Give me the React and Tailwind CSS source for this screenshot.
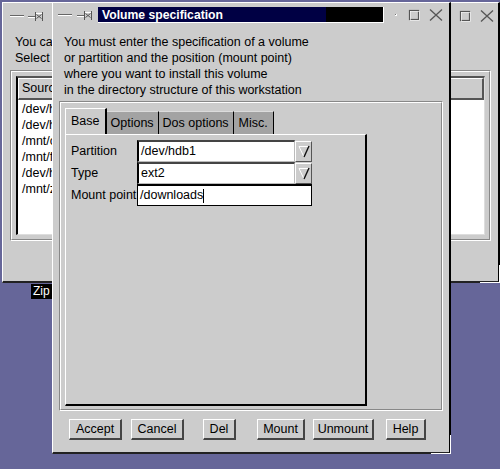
import React from 'react';

const font = { fontFamily: '"Liberation Sans", Arial, sans-serif' };

const Dash = () => (
  <svg width="15" height="6" viewBox="0 0 15 6" className="block">
    <line x1="0" y1="2.5" x2="14" y2="2.5" stroke="#666" strokeWidth="1" />
    <line x1="0" y1="3.5" x2="14" y2="3.5" stroke="#fff" strokeWidth="1" />
  </svg>
);

const Pin = () => (
  <svg width="16" height="11" viewBox="0 0 16 11" className="block">
    <line x1="0" y1="5.5" x2="7" y2="5.5" stroke="#666" />
    <line x1="0" y1="6.5" x2="7" y2="6.5" stroke="#fff" />
    <line x1="7.5" y1="1" x2="7.5" y2="10" stroke="#555" />
    <path d="M8.5 3.5 L13.5 7.5 M8.5 7.5 L13.5 3.5" stroke="#555" fill="none" />
    <line x1="14.5" y1="1" x2="14.5" y2="10" stroke="#555" />
    <line x1="8" y1="2.5" x2="14" y2="2.5" stroke="#fff" />
  </svg>
);

const MaxBox = () => (
  <svg width="12" height="12" viewBox="0 0 12 12" className="block">
    <rect x="1.5" y="1.5" width="9" height="9" fill="none" stroke="#555" strokeWidth="1.2" />
    <rect x="2.5" y="2.5" width="9" height="9" fill="none" stroke="#fff" strokeWidth="0.6" />
  </svg>
);

const CloseX = () => (
  <svg width="14" height="12" viewBox="0 0 14 12" className="block">
    <path d="M1 0.5 L13 11.5 M13 0.5 L1 11.5" stroke="#555" strokeWidth="1.3" fill="none" />
  </svg>
);

const ComboArrow = () => (
  <div className="w-[17px] h-[21px] bg-[#cccccc] border-t border-l border-white border-r border-b border-r-[#555] border-b-[#555] flex items-center justify-center">
    <svg width="12" height="13" viewBox="0 0 12 13" className="block">
      <path d="M1 1.5 H11" stroke="#fff" strokeWidth="1" />
      <path d="M1 1.5 L6 12" stroke="#fff" strokeWidth="1" />
      <path d="M11 1 L6 12" stroke="#111" strokeWidth="1.4" />
    </svg>
  </div>
);

const Button = ({ label, w, ml }) => (
  <button
    className={`h-[21px] ${w} ${ml} bg-[#cccccc] border-t border-l border-white border-r-2 border-b-2 border-r-[#444] border-b-[#444] text-[12.5px] text-black leading-none flex items-center justify-center`}
  >
    {label}
  </button>
);

const BackWindow = () => (
  <div className="absolute left-[2px] top-[2px] w-[498px] h-[281px] bg-[#cccccc] border-l border-t border-white border-r-2 border-b-2 border-r-black border-b-[#222]">
    <div className="h-[26px] flex items-center pl-[7px]">
      <Dash />
      <div className="ml-[3px]"><Pin /></div>
      <div className="flex-1" />
      <div className="mr-[9px]"><MaxBox /></div>
      <div className="mr-[4px]"><CloseX /></div>
    </div>
    <div className="pl-[12px] mt-[5px] text-[12.5px] leading-[16px] text-black">
      <div>You can mount</div>
      <div>Select a volume</div>
    </div>
    <div className="mx-[7px] mt-[4px] h-[171px] border border-t-[#888] border-l-[#888] border-b-white border-r-white">
      <div className="h-full border border-t-white border-l-white border-b-[#888] border-r-[#888] px-[4px] pt-[4px] pb-[4px]">
        <div className="h-full bg-white border-t-2 border-l-2 border-t-[#555] border-l-black border-b border-r border-b-[#ddd] border-r-[#ddd] flex flex-col">
          <div className="h-[22px] shrink-0 bg-[#cccccc] border-t border-l border-white border-r-2 border-b-2 border-r-[#555] border-b-[#555] pl-[3px] flex items-center text-[12.5px]">
            Source
          </div>
          <div className="pl-[4px] pt-[1px] text-[12.5px] leading-[16px]">
            <div>/dev/hda1</div>
            <div>/dev/hda5</div>
            <div>/mnt/cdrom</div>
            <div>/mnt/floppy</div>
            <div>/dev/hdb1</div>
            <div>/mnt/zip</div>
          </div>
        </div>
      </div>
    </div>
    <div className="absolute right-[-2px] bottom-[-2px] w-[20px] h-[18px] border-r border-b border-white" />
  </div>
);

const FrontWindow = () => (
  <div className="absolute left-[52px] top-[2px] w-[399px] h-[452px] bg-[#cccccc] border-l border-t border-white border-r-2 border-b-2 border-r-black border-b-[#222] flex flex-col">
    <div className="h-[24px] flex items-center pl-[5px] shrink-0">
      <Dash />
      <div className="ml-[4px]"><Pin /></div>
      <div className="ml-[5px] w-[286px] h-[16px] flex border-r border-b border-white">
        <div className="w-[228px] bg-[#000044] text-white font-bold text-[12.2px] leading-[16px] pl-[4px] whitespace-nowrap">
          Volume specification
        </div>
        <div className="flex-1 bg-black" />
      </div>
      <div className="ml-[11px] w-[2px] h-[2px] bg-[#777] border-r border-b border-white" />
      <div className="ml-[11px]"><MaxBox /></div>
      <div className="ml-[9px]"><CloseX /></div>
    </div>
    <div className="pl-[11px] mt-[7px] text-[12.5px] leading-[16px] text-black whitespace-nowrap">
      <div>You must enter the specification of a volume</div>
      <div>or partition and the position (mount point)</div>
      <div>where you want to install this volume</div>
      <div>in the directory structure of this workstation</div>
    </div>
    <div className="mx-[6px] mt-[3px] h-[310px] shrink-0 border border-t-[#888] border-l-[#888] border-b-white border-r-white">
      <div className="h-full border border-t-white border-l-white border-b-[#888] border-r-[#888] pl-[4px] pt-[5px] pb-[3px] flex flex-col">
        <div className="flex items-end h-[26px] shrink-0 text-[12.5px]">
          <div className="h-[26px] px-[5px] bg-[#cccccc] border-t border-l border-white border-r-2 border-r-black flex items-center">
            Base
          </div>
          <div className="h-[23px] px-[4px] bg-[#a3a3a3] border-t border-t-[#dcdcdc] border-r border-r-black flex items-center">
            Options
          </div>
          <div className="h-[23px] px-[4px] bg-[#a3a3a3] border-t border-t-[#dcdcdc] border-r border-r-black flex items-center">
            Dos options
          </div>
          <div className="h-[23px] px-[5px] bg-[#a3a3a3] border-t border-t-[#dcdcdc] border-r border-r-black flex items-center">
            Misc.
          </div>
        </div>
        <div className="w-[302px] flex-1 border-t border-l border-white border-r-2 border-b-2 border-r-black border-b-black pl-[5px] pt-[5px] text-[12.5px]">
          <div className="flex items-center h-[22px]">
            <div className="w-[66px] whitespace-nowrap">Partition</div>
            <div className="w-[158px] h-[22px] bg-white border-t-2 border-l-2 border-t-[#444] border-l-black border-b border-r border-b-[#bbb] border-r-[#bbb] pl-[2px] flex items-center">
              /dev/hdb1
            </div>
            <ComboArrow />
          </div>
          <div className="flex items-center h-[22px]">
            <div className="w-[66px] whitespace-nowrap">Type</div>
            <div className="w-[158px] h-[22px] bg-white border-t-2 border-l-2 border-t-[#444] border-l-black border-b border-r border-b-[#bbb] border-r-[#bbb] pl-[2px] flex items-center">
              ext2
            </div>
            <ComboArrow />
          </div>
          <div className="flex items-center h-[22px]">
            <div className="w-[66px] whitespace-nowrap">Mount point</div>
            <div className="w-[175px] h-[22px] bg-white border-t-2 border-l border-r border-b border-black pl-[2px] flex items-center">
              /downloads<span className="inline-block w-px h-[14px] bg-black" />
            </div>
          </div>
        </div>
      </div>
    </div>
    <div className="flex items-center mt-[8px]">
      <Button label="Accept" w="w-[53px]" ml="ml-[16px]" />
      <Button label="Cancel" w="w-[53px]" ml="ml-[9px]" />
      <Button label="Del" w="w-[33px]" ml="ml-[19px]" />
      <Button label="Mount" w="w-[48px]" ml="ml-[21px]" />
      <Button label="Unmount" w="w-[61px]" ml="ml-[8px]" />
      <Button label="Help" w="w-[40px]" ml="ml-[12px]" />
    </div>
    <div className="absolute right-[-2px] bottom-[-2px] w-[20px] h-[19px] border-r border-b border-white" />
  </div>
);

export default function App() {
  return (
    <div className="relative w-[500px] h-[469px] overflow-hidden bg-[#666699] text-black" style={font}>
      <BackWindow />
      <div className="absolute left-[31px] top-[284px] h-[15px] bg-black text-white text-[12px] leading-[15px] pl-[2px] pr-[4px]">
        Zip drive
      </div>
      <FrontWindow />
    </div>
  );
}
